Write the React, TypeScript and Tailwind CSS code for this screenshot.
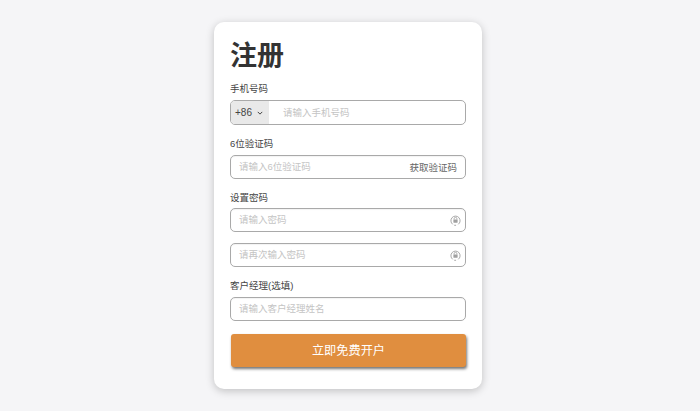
import React from "react";

const FONT = "font-['Liberation_Sans','Noto_Sans_CJK_SC',sans-serif]";

function LockIcon() {
  return (
    <svg viewBox="0 0 12 12" className="-mr-[4px] mt-[1px] h-[11px] w-[11px] text-[#a0a0a0]" fill="none">
      <path d="M3 10.2A5 5 0 1 1 9 10.2" stroke="currentColor" strokeWidth="1" />
      <path d="M4.6 11.2 L6.6 11.2" stroke="currentColor" strokeWidth="1" />
      <path d="M4.4 5V4.2a1.6 1.6 0 0 1 3.2 0V5" stroke="currentColor" strokeWidth="0.9" />
      <rect x="3.7" y="5" width="4.6" height="3.4" rx="0.4" fill="currentColor" />
    </svg>
  );
}

function Field({ placeholder, right }: { placeholder: string; right?: React.ReactNode }) {
  return (
    <div className="flex h-[24px] w-full items-center rounded-[5px] border border-[#a9a9a9] bg-white pl-2 pr-2 shadow-[inset_0_1px_1px_rgba(0,0,0,0.05)]">
      <span className="flex-1 pt-[1px] text-[9.5px] text-[#c4c4c4]">{placeholder}</span>
      {right}
    </div>
  );
}

export default function App() {
  return (
    <div className={`flex h-[411px] w-[700px] items-start justify-center overflow-hidden bg-[#f5f5f7] pt-[22px] ${FONT}`}>
      <div className="mr-[4px] flex h-[367px] w-[268px] flex-col rounded-[10px] bg-white px-4 pt-[16px] shadow-[0_2px_8px_rgba(0,0,0,0.22)]">
        <h1 className="h-[36px] text-[27px] leading-[36px] font-bold text-[#333]">注册</h1>

        <label className="mt-[7px] h-[15px] text-[9.5px] leading-[15px] text-[#444]">手机号码</label>
        <div className="mt-[4px] flex h-[25px] w-full items-center overflow-hidden rounded-[5px] border border-[#a9a9a9] bg-white">
          <div className="flex h-full w-[38px] items-center bg-[#e9e9e9] pl-[4px] text-[10px] text-[#444]">
            +86
            <svg viewBox="0 0 8 8" className="ml-[5px] h-[6px] w-[6px]" fill="none">
              <path d="M1 2.5 4 5.5 7 2.5" stroke="#333" strokeWidth="1.2" />
            </svg>
          </div>
          <span className="pl-[14px] pt-[1px] text-[9.5px] text-[#c4c4c4]">请输入手机号码</span>
        </div>

        <label className="mt-[11px] h-[15px] text-[9.5px] leading-[15px] text-[#444]">6位验证码</label>
        <div className="mt-[4px]">
          <Field
            placeholder="请输入6位验证码"
            right={<span className="pt-[2px] text-[9.5px] text-[#666]">获取验证码</span>}
          />
        </div>

        <label className="mt-[11px] h-[15px] text-[9.5px] leading-[15px] text-[#444]">设置密码</label>
        <div className="mt-[3px]">
          <Field placeholder="请输入密码" right={<LockIcon />} />
        </div>
        <div className="mt-[11px]">
          <Field placeholder="请再次输入密码" right={<LockIcon />} />
        </div>

        <label className="mt-[11px] h-[15px] text-[9.5px] leading-[15px] text-[#444]">客户经理(选填)</label>
        <div className="mt-[4px]">
          <Field placeholder="请输入客户经理姓名" />
        </div>

        <button className="mt-[13px] ml-[1px] flex h-[33px] w-[235px] items-center justify-center rounded-[3px] bg-[#e08e3f] pt-[1px] text-[12.2px] text-white shadow-[1px_2px_3px_rgba(0,0,0,0.55)]">
          立即免费开户
        </button>
      </div>
    </div>
  );
}
